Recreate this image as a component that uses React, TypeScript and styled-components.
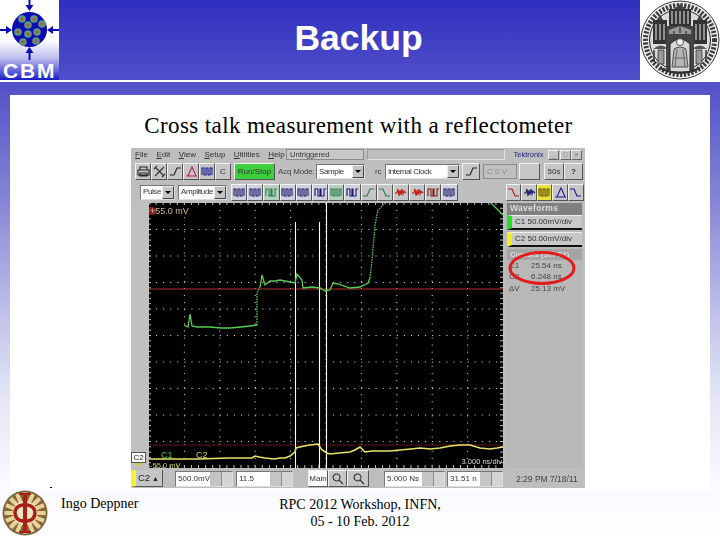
import React from 'react';
import styled, { createGlobalStyle } from 'styled-components';

const GlobalStyle = createGlobalStyle`
  html, body { margin: 0; padding: 0; background: #fff; }
  #root { width: 720px; height: 540px; overflow: hidden; }
`;

const Slide = styled.div`
  width: 720px;
  height: 540px;
  display: flex;
  flex-direction: column;
  background: linear-gradient(180deg, #2f2fc0 0%, #5050c8 15%, #8585d6 37%, #b8b8e8 55%, #e6e6f6 74%, #fafaff 90%, #fff 100%);
`;

const Header = styled.header`
  height: 80px;
  display: flex;
  border-bottom: 2px solid #fff;
`;

const Title = styled.h1`
  flex: 1;
  margin: 0;
  padding: 16px 0 0 18px;
  text-align: center;
  font: bold 35.5px/44px "Liberation Sans", Arial, sans-serif;
  color: #fff;
`;

const Body = styled.main`
  padding: 13px 10px 0;
`;

const Panel = styled.section`
  height: 395px;
  background: #fff;
  display: flex;
  flex-direction: column;
`;

const Caption = styled.div`
  height: 53px;
  padding: 17px 3px 0 0;
  box-sizing: border-box;
  text-align: center;
  font: 23px/28px "Liberation Serif", "Times New Roman", serif;
  letter-spacing: 0.38px;
  color: #000;
  white-space: nowrap;
`;

const Scope = styled.div`
  position: relative;
  width: 454px;
  height: 340px;
  margin-left: 121px;
  background: #bebebe;
  display: flex;
  flex-direction: column;
  font: 8px/12px "Liberation Sans", Arial, sans-serif;
  color: #222;
  filter: blur(0.35px);
`;

const MenuBar = styled.div`
  height: 14px;
  display: flex;
  align-items: center;
  gap: 8.5px;
  padding: 0 3px 0 4px;
`;

const MenuItem = styled.span`
  color: #333;
  &::first-letter { text-decoration: underline; }
`;

const StatusField = styled.div`
  width: 78px;
  height: 11px;
  margin-left: -7px;
  background: #c8c8c8;
  border: 1px solid #8a8a8a;
  box-sizing: border-box;
  font-size: 7.5px;
  line-height: 9px;
  padding-left: 3px;
  color: #333;
`;

const TitleFill = styled.div`
  flex: 1;
  height: 11px;
  margin-left: -6px;
  border: 1px solid #9c9c9c;
  border-right-color: #e0e0e0;
  border-bottom-color: #e0e0e0;
  box-sizing: border-box;
`;

const Brand = styled.span`
  color: #23237a;
  font-size: 7.5px;
  margin-right: 4px;
`;

const WinButton = styled.div`
  width: 11px;
  height: 10px;
  margin-left: -8px;
  background: #c4c4c4;
  border: 1px solid #eee;
  border-right-color: #666;
  border-bottom-color: #666;
  box-sizing: border-box;
  font-size: 7px;
  line-height: 8px;
  text-align: center;
  color: #777;
`;

const ToolRow = styled.div`
  height: 21px;
  display: flex;
  align-items: center;
  padding-left: 4px;
`;

const ToolButton = styled.div<{ $w?: number; $bg?: string; $ml?: number }>`
  width: ${p => p.$w ?? 16}px;
  height: 17px;
  margin-left: ${p => p.$ml ?? 0}px;
  flex: none;
  box-sizing: border-box;
  display: flex;
  align-items: center;
  justify-content: center;
  background: ${p => p.$bg ?? '#c6c6c6'};
  border: 1px solid #f2f2f2;
  border-right-color: #555;
  border-bottom-color: #555;
  white-space: nowrap;
  overflow: hidden;
  color: #333;
`;

const Label = styled.span<{ $w: number; $ml?: number }>`
  width: ${p => p.$w}px;
  margin-left: ${p => p.$ml ?? 0}px;
  flex: none;
  white-space: nowrap;
  color: #444;
  letter-spacing: -0.2px;
`;

const Select = styled.div<{ $w: number; $ml?: number }>`
  width: ${p => p.$w}px;
  height: 15px;
  margin-left: ${p => p.$ml ?? 0}px;
  flex: none;
  box-sizing: border-box;
  display: flex;
  align-items: center;
  padding-left: 2px;
  background: #fff;
  border: 1px solid #777;
  border-right-color: #ddd;
  border-bottom-color: #ddd;
  color: #333;
  letter-spacing: -0.4px;
  white-space: nowrap;
  overflow: hidden;
`;

const SelectArrow = styled.div`
  margin-left: auto;
  width: 12px;
  height: 13px;
  flex: none;
  background: #c4c4c4;
  border: 1px solid #eee;
  border-right-color: #444;
  border-bottom-color: #444;
  box-sizing: border-box;
  display: flex;
  align-items: center;
  justify-content: center;
  &::after {
    content: '';
    border: 3px solid transparent;
    border-top: 3px solid #000;
    margin-top: 3px;
  }
`;

const Disabled = styled.div`
  width: 34px;
  height: 15px;
  margin-left: 3px;
  flex: none;
  box-sizing: border-box;
  padding-left: 3px;
  background: #c0c0c0;
  border: 1px solid #8c8c8c;
  color: #8e8e8e;
  line-height: 13px;
`;

const Middle = styled.div`
  height: 265px;
  display: flex;
`;

const LeftStrip = styled.div`
  width: 18px;
  flex: none;
  position: relative;
  background: #c0c0c0;
`;

const ChannelTag = styled.div`
  position: absolute;
  left: 0;
  top: 249px;
  width: 15px;
  height: 11px;
  background: #fff;
  border: 1px solid #555;
  box-sizing: border-box;
  font-size: 8px;
  line-height: 9px;
  text-align: center;
  &::after {
    content: '';
    position: absolute;
    left: 3px;
    top: 10px;
    border: 4px solid transparent;
    border-top: 4px solid #c8c850;
  }
`;

const Plot = styled.svg`
  width: 354px;
  height: 265px;
  flex: none;
  display: block;
  background: #000;
`;

const SidePanel = styled.aside`
  width: 78px;
  margin-left: 2px;
  flex: none;
  background: #b8b8b8;
`;

const SideHead = styled.div<{ $light?: boolean }>`
  width: 75px;
  height: ${p => (p.$light ? 11 : 12)}px;
  margin-left: 2px;
  padding-left: 3px;
  box-sizing: border-box;
  background: ${p => (p.$light ? '#a4a4a4' : '#808080')};
  color: #ddd;
  font-size: ${p => (p.$light ? 7.5 : 8.5)}px;
  font-weight: bold;
  line-height: 11px;
  letter-spacing: ${p => (p.$light ? 0 : 0.3)}px;
  white-space: nowrap;
`;

const WaveRow = styled.div<{ $c: string }>`
  width: 75px;
  height: 15px;
  margin: 0 0 2px 2px;
  box-sizing: border-box;
  border-left: 5px solid ${p => p.$c};
  border-top: 1px solid #eee;
  border-bottom: 2px solid #111;
  background: #c8c8c8;
  padding-left: 3px;
  font-size: 8px;
  line-height: 12px;
  color: #333;
  white-space: nowrap;
`;

const CursorRows = styled.div`
  display: flex;
  flex-direction: column;
  padding: 0 0 0 4px;
`;

const CursorRow = styled.div`
  display: flex;
  height: 11.5px;
  font-size: 8px;
  line-height: 11px;
  color: #444;
`;

const CursorKey = styled.span`
  width: 22px;
`;

const BottomRow = styled.div`
  height: 19px;
  margin-top: 2px;
  display: flex;
  align-items: center;
`;

const ChannelButton = styled.div`
  width: 32px;
  height: 17px;
  flex: none;
  box-sizing: border-box;
  border-left: 5px solid #f2f23a;
  border-right: 1px solid #555;
  border-bottom: 1px solid #555;
  background: #c6c6c6;
  padding-left: 2px;
  font-size: 9.5px;
  line-height: 16px;
  white-space: nowrap;
  &::after { content: ' ▲'; font-size: 7px; }
`;

const Spin = styled.div<{ $ml: number; $w: number }>`
  width: ${p => p.$w}px;
  height: 16px;
  margin-left: ${p => p.$ml}px;
  flex: none;
  display: flex;
  align-items: center;
  box-sizing: border-box;
  background: #fff;
  border: 1px solid #777;
  border-right-color: #ddd;
  border-bottom-color: #ddd;
  padding-left: 2px;
  color: #333;
  white-space: nowrap;
  overflow: hidden;
`;

const SpinEnd = styled.div`
  margin-left: auto;
  width: 22px;
  height: 14px;
  flex: none;
  background: linear-gradient(90deg, #c4c4c4 50%, #8c8c8c 50%, #8c8c8c 54%, #d4d4d4 54%);
`;

const Clock = styled.div`
  margin-left: 13px;
  font-size: 8.5px;
  color: #444;
  white-space: nowrap;
`;

const RedRing = styled.svg`
  position: absolute;
  left: 376px;
  top: 100px;
  width: 72px;
  height: 40px;
  overflow: visible;
`;

const Footer = styled.footer`
  flex: 1;
  display: grid;
  grid-template-columns: 61px 210px 178px;
  font: 14px/17px "Liberation Serif", "Times New Roman", serif;
  color: #000;
`;

const FooterLogo = styled.div`
  position: relative;
  padding: 0 0 0 2px;
  &::before {
    content: '';
    position: absolute;
    left: 50px;
    top: -3px;
    width: 2px;
    height: 1px;
    background: #000;
  }
`;

const FooterName = styled.div`
  padding-top: 5px;
`;

const FooterCenter = styled.div`
  padding-top: 6px;
  text-align: center;
  white-space: nowrap;
`;

const modules: [number, number][] = [
  [22, 19], [34, 19], [42, 24], [28, 25], [18, 32], [37, 32], [28, 34], [23, 42], [36, 41],
];

const CbmLogo = () => (
  <svg width="59" height="80" viewBox="0 0 59 80" style={{ flex: 'none', display: 'block' }}>
    <defs>
      <linearGradient id="cbmBg" x1="0" y1="0" x2="0" y2="1">
        <stop offset="0.5" stopColor="#ffffff" />
        <stop offset="0.72" stopColor="#c0c0ee" />
        <stop offset="0.9" stopColor="#5a5ad8" />
        <stop offset="1" stopColor="#1818c8" />
      </linearGradient>
    </defs>
    <rect width="59" height="80" fill="url(#cbmBg)" />
    <g fill="#0b0bb4">
      <circle cx="29.5" cy="29.5" r="17.5" />
      <path d="M28.500 0h2v5h3l-4 6-4-6h3z" />
      <path d="M28.500 60h2v-7h3l-4-6-4 6h3z" />
      <path d="M0 29h6v-3l6 4-6 4v-3H0z" />
      <path d="M59 29h-6v-3l-6 4 6 4v-3h6z" />
    </g>
    {modules.map(([x, y]) => (
      <g key={`${x}-${y}`}>
        <circle cx={x} cy={y} r="3.800" fill="#5c9a7a" />
        <circle cx={x} cy={y} r="1.700" fill="#a85a50" />
      </g>
    ))}
    <text x="3" y="78" fontFamily="Liberation Sans, Arial, sans-serif" fontWeight="bold" fontSize="21" letterSpacing="1.800" fill="#fff">CBM</text>
  </svg>
);

const SealLogo = () => (
  <svg width="80" height="80" viewBox="0 0 80 80" style={{ flex: 'none', display: 'block', background: '#fff' }}>
    <circle cx="40" cy="40" r="39" fill="#efefef" stroke="#333" strokeWidth="1" />
    <circle cx="40" cy="40" r="34.500" fill="none" stroke="#3c3c3c" strokeWidth="5" strokeDasharray="2.200 1.500" />
    <circle cx="40" cy="40" r="30.500" fill="#dcdcdc" stroke="#222" strokeWidth="1" />
    <path d="M29 9h22v17H29zM13 20h14v24H13zM53 20h14v24H53z" fill="#333" />
    <path d="M26 26h28v46H26z" fill="#444" />
    <path d="M17 20l3-6 3 6zM57 20l3-6 3 6zM34 9l6-5 6 5z" fill="#444" />
    <path d="M32 11v13M36 11v13M40 11v13M44 11v13M48 11v13M16 24v16M20 24v16M24 24v16M56 24v16M60 24v16M64 24v16" stroke="#ddd" strokeWidth="1.100" />
    <path d="M29 30l11-4 11 4v4H29z" fill="#999" />
    <path d="M40 27v6M34 31v3M46 31v3" stroke="#222" strokeWidth="1" />
    <path d="M30 72V44q10-10 20 0v28z" fill="#d8d8d8" stroke="#222" strokeWidth="1" />
    <circle cx="40" cy="42" r="3.500" fill="#f4f4f4" stroke="#333" strokeWidth="0.800" />
    <path d="M34 49q6-4 12 0l2 18H32z" fill="#b4b4b4" stroke="#333" strokeWidth="0.800" />
    <path d="M37 49l-2 18M43 49l2 18M34 58h12" stroke="#555" strokeWidth="0.800" />
    <path d="M13 49q8-7 15 0zM52 49q8-7 15 0z" fill="#555" />
    <path d="M18 50h6v14h-6zM56 50h6v14h-6z" fill="#999" stroke="#222" strokeWidth="0.700" />
    <path d="M14 50v12M66 50v12" stroke="#333" strokeWidth="1.500" />
    <path d="M20 68q20 10 40 0" fill="none" stroke="#333" strokeWidth="2" />
  </svg>
);

const InstituteLogo = () => {
  const segs = Array.from({ length: 16 }, (_, i) => i * 22.5);
  return (
    <svg width="46" height="46" viewBox="0 0 46 46" style={{ display: 'block' }}>
      <circle cx="23" cy="23" r="22.500" fill="#7a6c44" />
      {segs.map(a => (
        <rect key={a} x="20.500" y="2" width="5" height="11" rx="1" fill="#e4d49a" stroke="#8a4a24" strokeWidth="0.700" transform={`rotate(${a} 23 23)`} />
      ))}
      <circle cx="23" cy="23" r="12" fill="#efe5c4" />
      <path d="M17 3h12v2h-4v36h4v2H17v-2h4V5h-4z" fill="#a82018" />
      <path d="M21 15a8 8 0 0 0 0 16M25 15a8 8 0 0 1 0 16" fill="none" stroke="#a82018" strokeWidth="3.500" />
    </svg>
  );
};

type IconKind = 'pulse' | 'rise' | 'fall' | 'burst' | 'eye' | 'peak' | 'tools' | 'printer' | 'zoom';

const iconPaths: Record<IconKind, string> = {
  pulse: 'M1 10V3h2v7h2V3h2v7h2V3h2v7',
  rise: 'M1 10h4l3-7h4',
  fall: 'M1 3h4l3 7h4',
  burst: 'M1 7h2l1-4 1 7 1-6 1 5 1-6 1 5 1-3 2 2',
  eye: 'M1 10V3h3v7h2V3h1v7h3V3h2',
  peak: 'M1 11h2l3-7 1-2 1 2 3 7h1M2 11h9',
  tools: 'M2 2l9 9M11 2l-9 9M1 4l3-3M9 12l3-3',
  printer: 'M3 5V2h7v3M1 5h11v5H1zM3 8h7v3H3z',
  zoom: 'M8 8a3.500 3.500 0 1 1 .1-.1zM8 8l4 4',
};

const WaveIcon = ({ kind = 'pulse', color = '#1a1a7a' }: { kind?: IconKind; color?: string }) => (
  <svg width="13" height="13" viewBox="0 0 13 13">
    <path d={iconPaths[kind]} fill="none" stroke={color} strokeWidth="1.100" />
  </svg>
);

const toolIcons: { kind: IconKind; color: string; bg?: string }[] = [
  { kind: 'pulse', color: '#1a1a6a', bg: '#d0d0de' },
  { kind: 'pulse', color: '#1a1a6a', bg: '#d0d0de' },
  { kind: 'eye', color: '#2a7a4a', bg: '#b8d0c0' },
  { kind: 'pulse', color: '#1a1a6a', bg: '#d0d0de' },
  { kind: 'pulse', color: '#1a1a6a', bg: '#d0d0de' },
  { kind: 'eye', color: '#1a1a6a', bg: '#d0d0de' },
  { kind: 'pulse', color: '#2a7a4a', bg: '#b8d0c0' },
  { kind: 'eye', color: '#1a1a6a', bg: '#d0d0de' },
  { kind: 'rise', color: '#2a7a4a' },
  { kind: 'fall', color: '#2a7a4a' },
  { kind: 'burst', color: '#c01818' },
  { kind: 'burst', color: '#c01818' },
  { kind: 'eye', color: '#7a1a1a' },
  { kind: 'pulse', color: '#1a1a6a', bg: '#d0d0de' },
];

const greenFlat = [
  '35,122 39,124 41,111 43,123 48,124 61,124 72,125 81,125 92,124 101,123 108,122',
  '111,84 113,72 116,82 121,78 126,78 131,77 141,79 146,80 148,71 153,77 154,85 163,84 171,85 176,88 181,87 184,80 189,81 201,85 211,84 219,80 221,75',
  '340,-2 346,4 354,12',
];
const greenEdge = ['108,122 108,90 111,84', '221,75 223,57 226,22 229,7 235,1 239,-1'];
const yellowTrace =
  '0,256 50,256 80,255 103,255 106,253 110,254 116,255 125,256 131,255 136,255 141,253 146,249 147,245 155,243 161,242 169,241 173,247 178,250 181,251 190,250 201,249 206,247 211,244 216,249 223,248 231,248 241,248 251,247 262,246 271,245 281,246 291,245 301,243 311,242 321,242 331,245 341,246 348,245 354,244';

const Chart = () => {
  const cols = Array.from({ length: 9 }, (_, i) => 35.4 * (i + 1));
  const rows = Array.from({ length: 9 }, (_, i) => 26.5 * (i + 1));
  const ticksX = Array.from({ length: 50 }, (_, i) => i * 7.08);
  const ticksY = Array.from({ length: 50 }, (_, i) => i * 5.3);
  return (
    <Plot viewBox="0 0 354 265">
      {cols.map(x => (
        <line key={x} x1={x} x2={x} y1="0" y2="265" stroke="#e8e8e8" strokeWidth="1" strokeDasharray="1 6.080" />
      ))}
      {rows.map(y => (
        <line key={y} x1="0" x2="354" y1={y} y2={y} stroke="#e8e8e8" strokeWidth="1" strokeDasharray="1 6.080" />
      ))}
      {ticksX.map(x => (
        <g key={x} stroke="#bbb">
          <line x1={x} x2={x} y1="0" y2="2" />
          <line x1={x} x2={x} y1="262" y2="265" />
        </g>
      ))}
      {ticksY.map(y => (
        <g key={y} stroke="#bbb">
          <line x1="0" x2="2" y1={y} y2={y} />
          <line x1="351" x2="354" y1={y} y2={y} />
        </g>
      ))}
      <line x1="0" x2="354" y1="86" y2="86" stroke="#b03030" />
      <line x1="0" x2="354" y1="242" y2="242" stroke="#5c1414" />
      <line x1="146.500" x2="146.500" y1="19" y2="265" stroke="#fff" strokeWidth="1.100" />
      <line x1="170.500" x2="170.500" y1="19" y2="265" stroke="#fff" strokeWidth="1.100" />
      <line x1="177.500" x2="177.500" y1="0" y2="265" stroke="#fff" strokeWidth="1.100" />
      {greenFlat.map(p => (
        <polyline key={p} points={p} fill="none" stroke="#58cc58" strokeWidth="1.300" />
      ))}
      {greenEdge.map(p => (
        <polyline key={p} points={p} fill="none" stroke="#58cc58" strokeWidth="1.300" strokeDasharray="1.500 1" />
      ))}
      <polyline points={yellowTrace} fill="none" stroke="#e8e468" strokeWidth="1.600" />
      <circle cx="3" cy="8" r="4" fill="#902020" />
      <g fontFamily="Liberation Sans, Arial, sans-serif">
        <text x="1" y="11" fontSize="9" fill="#c8b890">+55.0 mV</text>
        <text x="12" y="255" fontSize="9" fill="#4cc84c">C1</text>
        <text x="47" y="255" fontSize="9" fill="#d8d850">C2</text>
        <text x="1" y="264.500" fontSize="7.500" fill="#c8c850">-55.0 mV</text>
        <text x="353" y="261" fontSize="7.500" textAnchor="end" fill="#ddd">3.000 ns/div</text>
      </g>
    </Plot>
  );
};

const menus = ['File', 'Edit', 'View', 'Setup', 'Utilities', 'Help'];

const App = () => (
  <>
    <GlobalStyle />
    <Slide>
      <Header>
        <CbmLogo />
        <Title>Backup</Title>
        <SealLogo />
      </Header>
      <Body>
        <Panel>
          <Caption>Cross talk measurement with a reflectometer</Caption>
          <Scope>
            <MenuBar>
              {menus.map(m => <MenuItem key={m}>{m}</MenuItem>)}
              <StatusField>Untriggered</StatusField>
              <TitleFill />
              <Brand>Tektronix</Brand>
              <WinButton>_</WinButton>
              <WinButton>□</WinButton>
              <WinButton>×</WinButton>
            </MenuBar>
            <ToolRow>
              <ToolButton><WaveIcon kind="printer" color="#222" /></ToolButton>
              <ToolButton><WaveIcon kind="tools" color="#333" /></ToolButton>
              <ToolButton><WaveIcon kind="rise" color="#222" /></ToolButton>
              <ToolButton><WaveIcon kind="peak" color="#b02060" /></ToolButton>
              <ToolButton><WaveIcon kind="pulse" color="#1a1a9a" /></ToolButton>
              <ToolButton>C</ToolButton>
              <ToolButton $w={41} $bg="#3cd03c" $ml={3}>Run/Stop</ToolButton>
              <Label $w={38} $ml={3}>Acq Mode:</Label>
              <Select $w={49}>Sample<SelectArrow /></Select>
              <Label $w={10} $ml={10}>rc</Label>
              <Select $w={75}>Internal Clock<SelectArrow /></Select>
              <ToolButton $w={18} $ml={2}><WaveIcon kind="rise" color="#222" /></ToolButton>
              <Disabled>C 0 V</Disabled>
              <ToolButton $w={21} $ml={2} />
              <ToolButton $w={20} $ml={4}>50s</ToolButton>
              <ToolButton $w={19}><b>?</b></ToolButton>
            </ToolRow>
            <ToolRow>
              <Select $w={35} $ml={5}>Pulse<SelectArrow /></Select>
              <Select $w={49} $ml={3}>Amplitude<SelectArrow /></Select>
              {toolIcons.map((t, i) => (
                <ToolButton key={i} $w={16.2} $bg={t.bg} $ml={i === 0 ? 4 : 0}>
                  <WaveIcon kind={t.kind} color={t.color} />
                </ToolButton>
              ))}
              <ToolButton $w={15.6} $ml={48}><WaveIcon kind="fall" color="#b01818" /></ToolButton>
              <ToolButton $w={15.6}><WaveIcon kind="burst" color="#1a1a6a" /></ToolButton>
              <ToolButton $w={15.6} $bg="#e8e040"><WaveIcon kind="pulse" color="#5a4a00" /></ToolButton>
              <ToolButton $w={15.6}><WaveIcon kind="peak" color="#1a1a9a" /></ToolButton>
              <ToolButton $w={15.6}><WaveIcon kind="fall" color="#1a1a7a" /></ToolButton>
            </ToolRow>
            <Middle>
              <LeftStrip><ChannelTag>C2</ChannelTag></LeftStrip>
              <Chart />
              <SidePanel>
                <SideHead>Waveforms</SideHead>
                <WaveRow $c="#22e022">C1 50.00mV/div</WaveRow>
                <WaveRow $c="#f0f020">C2 50.00mV/div</WaveRow>
                <SideHead $light>Cursors (Set C1)</SideHead>
                <CursorRows>
                  <CursorRow><CursorKey>C1</CursorKey>25.54 ns</CursorRow>
                  <CursorRow><CursorKey>C2</CursorKey>6.248 ns</CursorRow>
                  <CursorRow><CursorKey>ΔV</CursorKey>25.13 mV</CursorRow>
                </CursorRows>
              </SidePanel>
            </Middle>
            <BottomRow>
              <ChannelButton>C2</ChannelButton>
              <Spin $ml={12} $w={58}>500.0mV<SpinEnd /></Spin>
              <Spin $ml={3} $w={57}>11.5<SpinEnd /></Spin>
              <ToolButton $w={20} $ml={15} $bg="#fff">Main</ToolButton>
              <ToolButton $w={19}><WaveIcon kind="zoom" color="#333" /></ToolButton>
              <ToolButton $w={22}><WaveIcon kind="zoom" color="#333" /></ToolButton>
              <Spin $ml={15} $w={61}>5.000 Ns<SpinEnd /></Spin>
              <Spin $ml={2} $w={56}>31.51 n<SpinEnd /></Spin>
              <Clock>2:29 PM 7/18/11</Clock>
            </BottomRow>
            <RedRing viewBox="0 0 72 40">
              <ellipse cx="35" cy="20" rx="32" ry="15.500" fill="none" stroke="#e01c1c" strokeWidth="3" />
            </RedRing>
          </Scope>
        </Panel>
      </Body>
      <Footer>
        <FooterLogo><InstituteLogo /></FooterLogo>
        <FooterName>Ingo Deppner</FooterName>
        <FooterCenter>RPC 2012 Workshop, INFN,<br />05 - 10 Feb. 2012</FooterCenter>
      </Footer>
    </Slide>
  </>
);

export default App;
